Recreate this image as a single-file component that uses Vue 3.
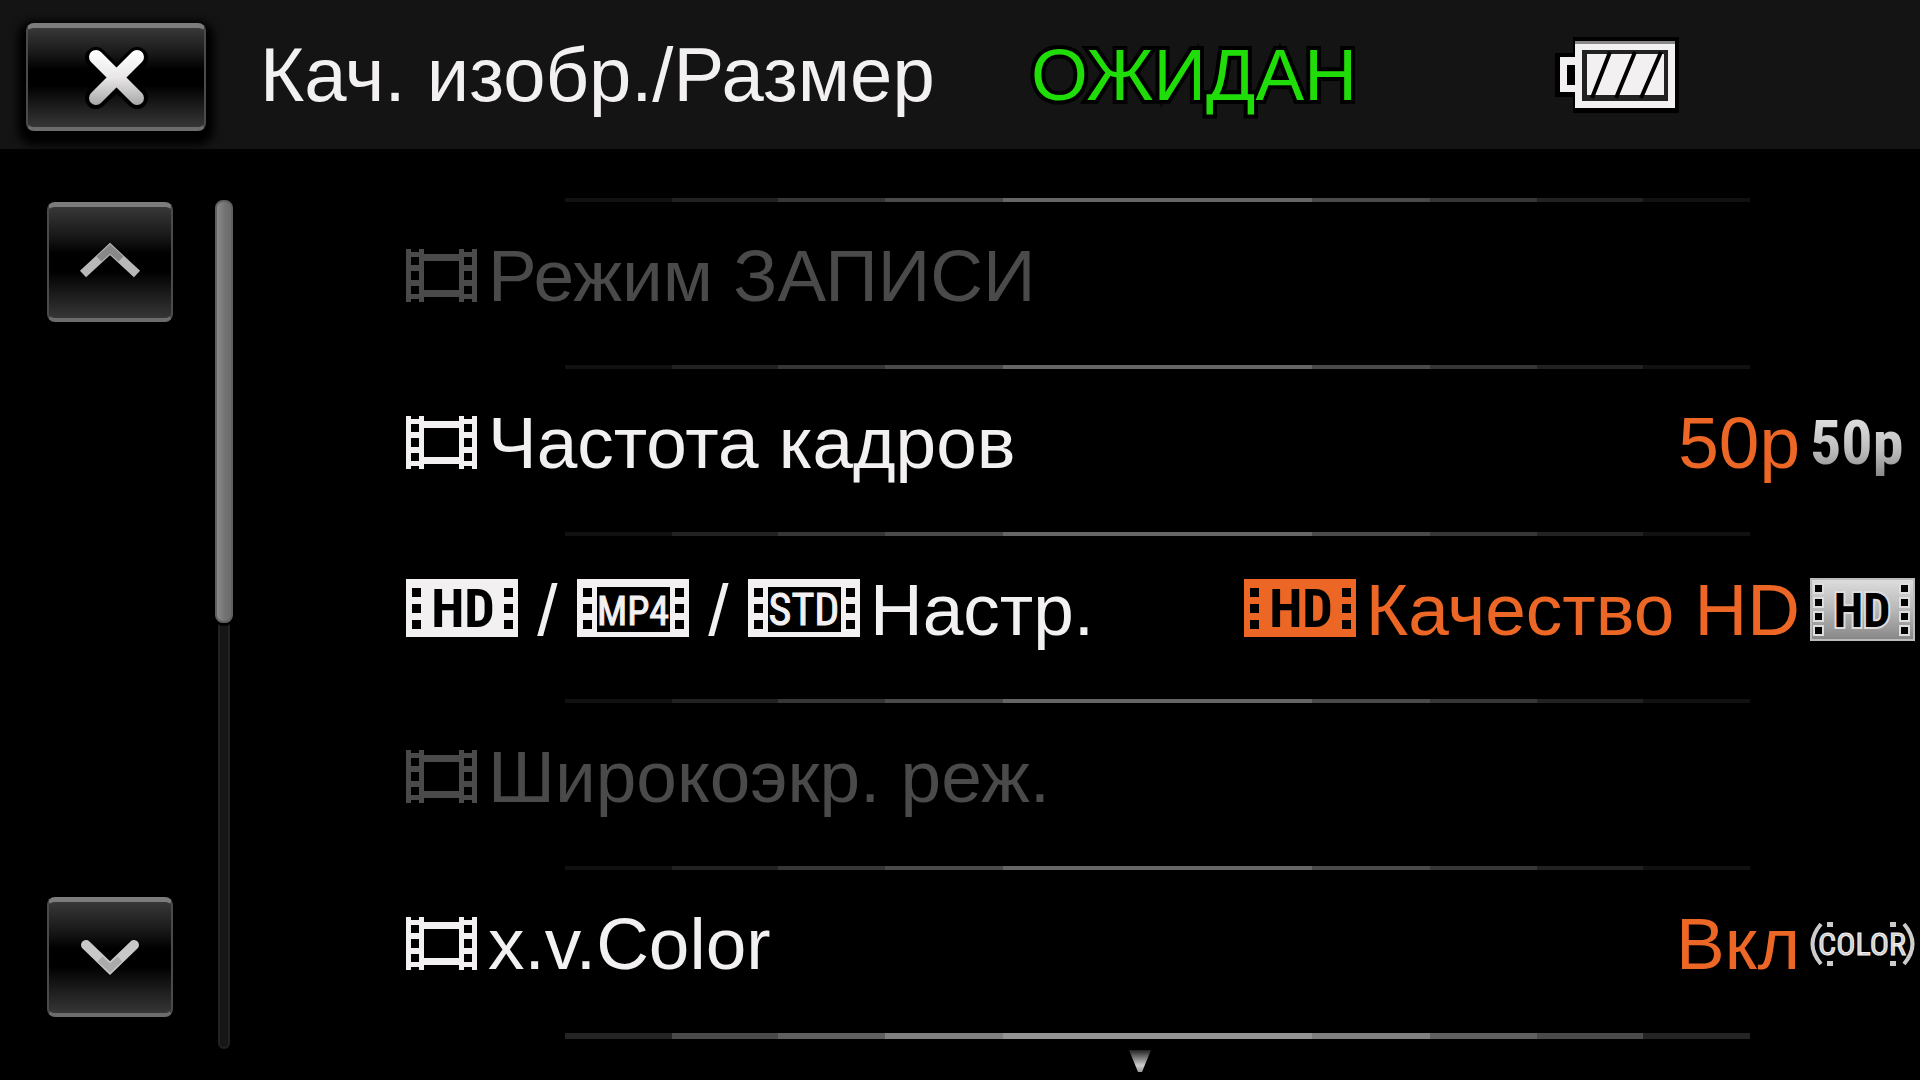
<script setup>
const rows = [
  { label: 'Режим ЗАПИСИ', film: true, disabled: true },
  { label: 'Частота кадров', film: true, value: '50p', badge: 'rate' },
  { label: 'Настр.', formats: ['HD', 'MP4', 'STD'], value: 'Качество HD', valueIcon: true, badge: 'hd' },
  { label: 'Широкоэкр. реж.', film: true, disabled: true },
  { label: 'x.v.Color', film: true, value: 'Вкл', badge: 'color' }
]
const holes = [9, 25, 41]
const captionSize = { MP4: 40, STD: 44 }
</script>

<template>
  <div class="screen">
    <header class="topbar">
      <button class="key close" type="button" aria-label="Закрыть">
        <svg width="64" height="64" viewBox="0 0 64 64" aria-hidden="true">
          <defs>
            <linearGradient id="cross" gradientUnits="userSpaceOnUse" x1="0" y1="6" x2="0" y2="58">
              <stop offset="0" stop-color="#fff" />
              <stop offset="0.5" stop-color="#e8e6e6" />
              <stop offset="1" stop-color="#aaa" />
            </linearGradient>
          </defs>
          <path d="M12 12L53 52M53 12L12 52" stroke="#000" stroke-width="22" stroke-linecap="round" />
          <path d="M12 11L53 52M53 11L12 52" stroke="url(#cross)" stroke-width="14" stroke-linecap="round" />
        </svg>
      </button>
      <h1 class="title">Кач. изобр./Размер</h1>
      <p class="status">ОЖИДАН</p>
      <svg class="battery" width="124" height="76" viewBox="0 0 124 76" role="img" aria-label="Батарея">
        <path d="M18 0H124V76H18V60H0V16H18Z" fill="#000" />
        <path d="M20 4H120V71H20V55H5V20H20Z" fill="#f2f0f0" />
        <path d="M20 4H120V7H20Z" fill="#888" />
        <path d="M12 28H20V48H12Z" fill="#000" />
        <path d="M27 13H113V64H27Z" fill="#222" />
        <path d="M32 17H109V58H32Z" fill="#f2f0f0" />
        <path d="M55 15L37 61M80 15L61 61M106 15L86 61" stroke="#000" stroke-width="4" />
      </svg>
    </header>

    <main class="body">
      <nav class="pager">
        <button class="key arrow" type="button" aria-label="Вверх">
          <svg width="64" height="44" viewBox="0 0 64 44" aria-hidden="true">
            <path d="M5 33L32 8L59 33" fill="none" stroke="#b8b8b8" stroke-width="9" />
            <path d="M21 18L32 8L43 18" fill="none" stroke="#888" stroke-width="7" />
          </svg>
        </button>
        <button class="key arrow" type="button" aria-label="Вниз">
          <svg width="64" height="44" viewBox="0 0 64 44" aria-hidden="true">
            <path d="M8 9L32 32L56 9" fill="none" stroke="#c8c8c8" stroke-width="10" stroke-linecap="round" />
            <path d="M22 23L32 32L42 23" fill="none" stroke="#aaa" stroke-width="7" />
          </svg>
        </button>
      </nav>

      <div class="track"><div class="thumb"></div></div>

      <div class="menu">
        <ul class="list">
          <li v-for="row in rows" :key="row.label" class="item">
            <div class="divider"></div>
            <button class="row" type="button" :disabled="row.disabled">
              <svg v-if="row.film" class="film" width="71" height="53" viewBox="0 0 71 53" aria-hidden="true">
                <path
                  fill="currentColor"
                  fill-rule="evenodd"
                  d="M0 0H5V3H13V0H18V5H53V0H58V3H66V0H71V53H66V50H58V53H53V48H18V53H13V50H5V53H0ZM5 8V16H13V8ZM5 22V31H13V22ZM5 37V45H13V37ZM58 8V16H66V8ZM58 22V31H66V22ZM58 37V45H66V37ZM18 12V41H53V12Z"
                />
              </svg>
              <template v-for="(format, i) in row.formats" :key="format">
                <span v-if="i" class="slash">/</span>
                <svg class="format" width="112" height="58" viewBox="0 0 112 58">
                  <rect width="112" height="58" fill="currentColor" />
                  <rect v-if="i" x="20" y="8" width="73" height="45" fill="#000" />
                  <template v-for="y in holes" :key="y">
                    <rect x="6" :y="y" width="9" height="9" fill="#000" />
                    <rect x="98" :y="y" width="9" height="9" fill="#000" />
                  </template>
                  <text v-if="i" class="cond heavy" x="56" y="46" :font-size="captionSize[format]" fill="currentColor" text-anchor="middle">{{ format }}</text>
                  <text v-else class="cond bold" x="57" y="48" font-size="54" fill="#000" text-anchor="middle">{{ format }}</text>
                </svg>
              </template>
              <span class="label">{{ row.label }}</span>
              <span v-if="row.value" class="value">
                <svg v-if="row.valueIcon" class="format" width="112" height="58" viewBox="0 0 112 58">
                  <rect width="112" height="58" fill="currentColor" />
                  <template v-for="y in holes" :key="y">
                    <rect x="6" :y="y" width="9" height="9" fill="#000" />
                    <rect x="98" :y="y" width="9" height="9" fill="#000" />
                  </template>
                  <text class="cond bold" x="57" y="48" font-size="54" fill="#000" text-anchor="middle">HD</text>
                </svg>
                <span>{{ row.value }}</span>
              </span>
              <span v-if="row.badge" class="badge">
                <span v-if="row.badge === 'rate'" class="rate cond bold">50p</span>
                <svg v-else-if="row.badge === 'hd'" width="105" height="63" viewBox="0 0 105 63">
                  <defs>
                    <linearGradient id="plate" x1="0" y1="0" x2="0" y2="1">
                      <stop offset="0" stop-color="#dcdcdc" />
                      <stop offset="0.5" stop-color="#b8b8b8" />
                      <stop offset="1" stop-color="#888" />
                    </linearGradient>
                  </defs>
                  <rect width="105" height="63" fill="#bbb" />
                  <rect x="2" y="2" width="101" height="59" fill="url(#plate)" />
                  <template v-for="y in [7, 21, 35, 49]" :key="y">
                    <rect x="3" :y="y - 2" width="11" height="11" fill="#ddd" />
                    <rect x="89" :y="y - 2" width="11" height="11" fill="#ddd" />
                    <rect x="5" :y="y" width="7" height="7" fill="#000" />
                    <rect x="91" :y="y" width="7" height="7" fill="#000" />
                  </template>
                  <text class="cond bold glow" x="52" y="49" font-size="48" text-anchor="middle">HD</text>
                </svg>
                <svg v-else width="105" height="44" viewBox="0 0 105 44">
                  <g fill="none" stroke="#ccc" stroke-width="4">
                    <path d="M11 2Q-6 22 11 42M94 2Q111 22 94 42" />
                    <path d="M20 0V5M83 0V5M20 39V44M83 39V44" stroke-width="6" />
                  </g>
                  <text class="cond heavy" x="52" y="33" font-size="32" fill="#ccc" text-anchor="middle">COLOR</text>
                </svg>
              </span>
            </button>
          </li>
        </ul>
        <div class="divider last"></div>
        <svg class="more" width="24" height="24" viewBox="0 0 24 24" aria-hidden="true">
          <defs>
            <linearGradient id="fade" x1="0" y1="0" x2="0" y2="1">
              <stop offset="0" stop-color="#222" />
              <stop offset="0.7" stop-color="#ccc" />
              <stop offset="1" stop-color="#999" />
            </linearGradient>
          </defs>
          <path d="M1 1H23L14 23H10Z" fill="url(#fade)" />
        </svg>
      </div>
    </main>
  </div>
</template>

<style>
body {
  margin: 0;
  background: #000;
}
</style>

<style scoped>
.screen {
  box-sizing: border-box;
  min-height: 100vh;
  display: flex;
  flex-direction: column;
  background: #000;
  color: #f2f0f0;
  font-family: "Liberation Sans", Arial, sans-serif;
  font-size: 73px;
  line-height: 84px;
}
.topbar {
  display: flex;
  align-items: center;
  height: 149px;
  padding-left: 26px;
  background: #141414;
}
.title,
.status {
  flex: none;
  margin: 0;
  font-weight: 400;
  font-size: 73px;
  white-space: nowrap;
}
.title {
  width: 716px;
  margin-left: 54px;
  font-size: 76px;
}
.status {
  width: 524px;
  margin-left: 55px;
  color: #20dc08;
  -webkit-text-stroke: 8px #000;
  paint-order: stroke fill;
}
.key {
  box-sizing: border-box;
  display: flex;
  flex: none;
  align-items: center;
  justify-content: center;
  padding: 0;
  border: 2px solid #4a4a4a;
  border-top: 5px solid #7c7c7c;
  border-bottom: 4px solid #6c6c6c;
  border-radius: 8px;
  background: linear-gradient(#383838, #181818 26%, #000 42%, #000 58%, #181818 76%, #363636);
}
.close {
  width: 180px;
  height: 108px;
  margin-top: 5px;
  box-shadow: 0 6px 8px 8px #000;
}
.arrow {
  width: 126px;
  height: 120px;
}
.body {
  flex: 1;
  display: flex;
  padding-left: 47px;
}
.pager {
  display: flex;
  flex-direction: column;
  justify-content: space-between;
  padding: 53px 0 63px;
}
.track {
  box-sizing: border-box;
  width: 12px;
  margin: 51px 0 31px 45px;
  border: 2px solid #222;
  border-radius: 6px;
  background: #161616;
}
.thumb {
  box-sizing: border-box;
  width: 18px;
  height: 50%;
  margin: -2px 0 0 -5px;
  border: 2px solid #606060;
  border-radius: 8px;
  background: linear-gradient(90deg, #8a8a8a, #727272 60%, #6c6c6c);
  box-shadow: 0 3px 0 #000;
}
.menu {
  flex: 1;
  display: flex;
  flex-direction: column;
  margin-left: 176px;
  padding-top: 49px;
}
.list {
  margin: 0;
  padding: 0;
  list-style: none;
}
.item {
  height: 167px;
}
.divider {
  height: 4px;
  margin: 0 170px 0 159px;
  background: linear-gradient(90deg, #111 9%, #222 9% 18%, #363636 18% 27%, #4a4a4a 27% 37%, #666 37% 63%, #4a4a4a 63% 73%, #363636 73% 82%, #222 82% 91%, #111 91%);
}
.divider.last {
  height: 6px;
  background: linear-gradient(90deg, #242424 9%, #4a4a4a 9% 18%, #606060 18% 27%, #808080 27% 37%, #949494 37% 63%, #808080 63% 73%, #606060 73% 82%, #4a4a4a 82% 91%, #242424 91%);
}
.row {
  box-sizing: border-box;
  display: flex;
  align-items: center;
  width: 100%;
  height: 163px;
  padding: 0 0 16px;
  border: 0;
  background: none;
  color: #f2f0f0;
  font: inherit;
  white-space: nowrap;
}
.row:disabled {
  color: #4a4a4a;
}
svg {
  display: block;
  flex: none;
  overflow: visible;
}
.film {
  margin-right: 11px;
}
.slash {
  width: 59px;
  text-align: center;
}
.format + .label {
  margin-left: 10px;
}
.format {
  margin-bottom: 4px;
}
.value {
  display: flex;
  align-items: center;
  gap: 10px;
  margin-left: auto;
  color: #ec6626;
}
.badge {
  display: flex;
  width: 110px;
  margin-left: 10px;
}
.cond {
  font-family: "Liberation Sans Narrow", "Roboto Condensed", "Liberation Sans", sans-serif;
}
.bold {
  font-weight: 700;
}
.heavy {
  stroke: currentColor;
  stroke-width: 1px;
}
.rate {
  font-size: 62px;
  color: transparent;
  background: linear-gradient(#e0e0e0 20%, #bbb 60%, #888 90%);
  background-clip: text;
}
.glow {
  stroke: #ddd;
  stroke-width: 4px;
  paint-order: stroke fill;
}
.more {
  margin: 10px 0 0 722px;
}
</style>
